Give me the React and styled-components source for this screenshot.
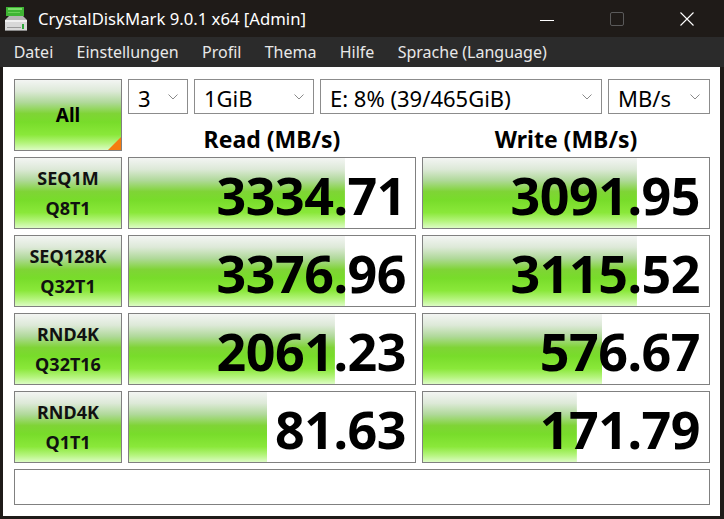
import React from 'react';
import styled, { createGlobalStyle } from 'styled-components';

const GlobalStyle = createGlobalStyle`
  html, body {
    margin: 0;
    padding: 0;
    background: #1f1b18;
  }
  body {
    font-family: "Noto Sans", "DejaVu Sans", sans-serif;
  }
`;

const barGradient = `linear-gradient(180deg,
  #f3f5f3 0%,
  #dde9d8 16%,
  #b0d99a 32%,
  #7fd436 48%,
  #78dc2a 60%,
  #8ae83a 78%,
  #b4f47c 90%,
  #dcfcc4 100%)`;

const Window = styled.div`
  width: 724px;
  height: 519px;
  display: flex;
  flex-direction: column;
  background: #1f1b18;
  overflow: hidden;
`;

const TitleBar = styled.div`
  height: 37px;
  display: flex;
  align-items: center;
  padding-left: 5px;
  color: #ffffff;
  font-size: 16.7px;
`;

const TitleText = styled.span`
  margin-left: 9px;
  flex: 1;
  padding-bottom: 1px;
`;

const Controls = styled.div`
  display: flex;
  height: 100%;
  margin-right: 2px;
`;

const ControlBtn = styled.div`
  width: 70px;
  height: 100%;
  display: flex;
  align-items: center;
  justify-content: center;
`;

const MenuBar = styled.div`
  height: 30px;
  display: flex;
  align-items: center;
  background: #2b2b2b;
  padding-left: 2px;
  color: #e8e8e8;
  font-size: 16px;
`;

const MenuItem = styled.span`
  padding: 0 11.6px 0 11.7px;
`;

const Content = styled.div`
  flex: 1;
  margin: 0 4px 3px 3px;
  background: #ffffff;
  padding: 12px 10px 11px 11px;
  display: flex;
  flex-direction: column;
  gap: 6px;
`;

const Top = styled.div`
  display: flex;
  gap: 6px;
`;

const AllButton = styled.div`
  position: relative;
  box-sizing: border-box;
  width: 108px;
  height: 72px;
  border: 1px solid #808080;
  background: ${barGradient};
  display: flex;
  align-items: center;
  justify-content: center;
  font-weight: 700;
  font-size: 19px;
  color: #000;
  &::after {
    content: "";
    position: absolute;
    right: 0;
    bottom: 0;
    width: 0;
    height: 0;
    border-style: solid;
    border-width: 0 0 13px 13px;
    border-color: transparent transparent #f57c10 transparent;
  }
`;

const TopRight = styled.div`
  width: 582px;
  display: flex;
  flex-direction: column;
`;

const SelectRow = styled.div`
  display: flex;
  gap: 6px;
  height: 35px;
`;

const Select = styled.div`
  box-sizing: border-box;
  width: ${(p) => p.$w}px;
  height: 35px;
  border: 1px solid #8c8c8c;
  display: flex;
  align-items: center;
  padding: 0 9px 0 9px;
  font-size: 22px;
  color: #000;
  span {
    flex: 1;
    padding-top: 2px;
    white-space: nowrap;
  }
`;

const HeaderRow = styled.div`
  display: flex;
  gap: 6px;
  height: 37px;
`;

const HeaderCell = styled.div`
  flex: 1;
  display: flex;
  align-items: flex-end;
  justify-content: center;
  font-weight: 700;
  font-size: 23px;
  line-height: 23px;
  padding-bottom: 0;
  color: #000;
`;

const Row = styled.div`
  display: grid;
  grid-template-columns: 108px 288px 288px;
  gap: 6px;
  height: 72px;
`;

const Label = styled.div`
  box-sizing: border-box;
  border: 1px solid #808080;
  background: ${barGradient};
  display: flex;
  flex-direction: column;
  align-items: center;
  justify-content: center;
  font-weight: 700;
  font-size: 18px;
  line-height: 30px;
  color: #111;
`;

const Value = styled.div`
  box-sizing: border-box;
  border: 1px solid #808080;
  background-color: #ffffff;
  background-image: ${barGradient};
  background-size: ${(p) => p.$pct}% 100%;
  background-repeat: no-repeat;
  display: flex;
  align-items: center;
  justify-content: flex-end;
  padding: 3px 9px 0 0;
  font-weight: 700;
  font-size: 52px;
  line-height: 52px;
  color: #000;
  letter-spacing: -0.5px;
`;

const Status = styled.div`
  box-sizing: border-box;
  height: 36px;
  width: 696px;
  border: 1px solid #808080;
`;

const Chevron = () => (
  <svg width="10" height="6" viewBox="0 0 10 6">
    <path d="M0.5 0.5 L5 5 L9.5 0.5" fill="none" stroke="#8a8a8a" strokeWidth="1" />
  </svg>
);

const AppIcon = () => (
  <svg width="24" height="26" viewBox="0 0 24 26">
    <rect x="1" y="1" width="18" height="9" fill="#3fb534" />
    <rect x="3" y="2" width="14" height="2" fill="#7be06a" />
    <rect x="3" y="6" width="12" height="1" fill="#6ad258" />
    <path d="M4 10 L18 10 L22 14 L0 14 Z" fill="#b5b5b5" />
    <rect x="0" y="14" width="22" height="11" fill="#d8d8d8" />
    <rect x="0" y="14" width="22" height="2" fill="#f0f0f0" />
    <rect x="2" y="21" width="14" height="1" fill="#9a9a9a" />
    <rect x="17" y="18" width="2" height="5" fill="#2fa83a" />
    <rect x="0" y="24" width="22" height="1" fill="#8a8a8a" />
  </svg>
);

const rows = [
  { a: 'SEQ1M', b: 'Q8T1', r: '3334.71', rp: 75.5, w: '3091.95', wp: 74.8 },
  { a: 'SEQ128K', b: 'Q32T1', r: '3376.96', rp: 75.5, w: '3115.52', wp: 74.8 },
  { a: 'RND4K', b: 'Q32T16', r: '2061.23', rp: 72, w: '576.67', wp: 62.6 },
  { a: 'RND4K', b: 'Q1T1', r: '81.63', rp: 48.3, w: '171.79', wp: 53.8 },
];

const menus = ['Datei', 'Einstellungen', 'Profil', 'Thema', 'Hilfe', 'Sprache (Language)'];

export default function App() {
  return (
    <Window>
      <GlobalStyle />
      <TitleBar>
        <AppIcon />
        <TitleText>CrystalDiskMark 9.0.1 x64 [Admin]</TitleText>
        <Controls>
          <ControlBtn>
            <svg width="16" height="16" viewBox="0 0 16 16">
              <path d="M1 9.5 H15" stroke="#ffffff" strokeWidth="1" />
            </svg>
          </ControlBtn>
          <ControlBtn>
            <svg width="16" height="16" viewBox="0 0 16 16">
              <rect x="1.5" y="1.5" width="13" height="13" rx="1.5" fill="none" stroke="#5a5a5a" strokeWidth="1" />
            </svg>
          </ControlBtn>
          <ControlBtn>
            <svg width="16" height="16" viewBox="0 0 16 16">
              <path d="M1.5 1.5 L14.5 14.5 M14.5 1.5 L1.5 14.5" stroke="#ffffff" strokeWidth="1.1" />
            </svg>
          </ControlBtn>
        </Controls>
      </TitleBar>
      <MenuBar>
        {menus.map((m) => (
          <MenuItem key={m}>{m}</MenuItem>
        ))}
      </MenuBar>
      <Content>
        <Top>
          <AllButton>All</AllButton>
          <TopRight>
            <SelectRow>
              <Select $w={60}><span>3</span><Chevron /></Select>
              <Select $w={120}><span>1GiB</span><Chevron /></Select>
              <Select $w={282}><span>E: 8% (39/465GiB)</span><Chevron /></Select>
              <Select $w={102}><span>MB/s</span><Chevron /></Select>
            </SelectRow>
            <HeaderRow>
              <HeaderCell>Read (MB/s)</HeaderCell>
              <HeaderCell>Write (MB/s)</HeaderCell>
            </HeaderRow>
          </TopRight>
        </Top>
        {rows.map((r, i) => (
          <Row key={i}>
            <Label>
              <div>{r.a}</div>
              <div>{r.b}</div>
            </Label>
            <Value $pct={r.rp}>{r.r}</Value>
            <Value $pct={r.wp}>{r.w}</Value>
          </Row>
        ))}
        <Status />
      </Content>
    </Window>
  );
}
